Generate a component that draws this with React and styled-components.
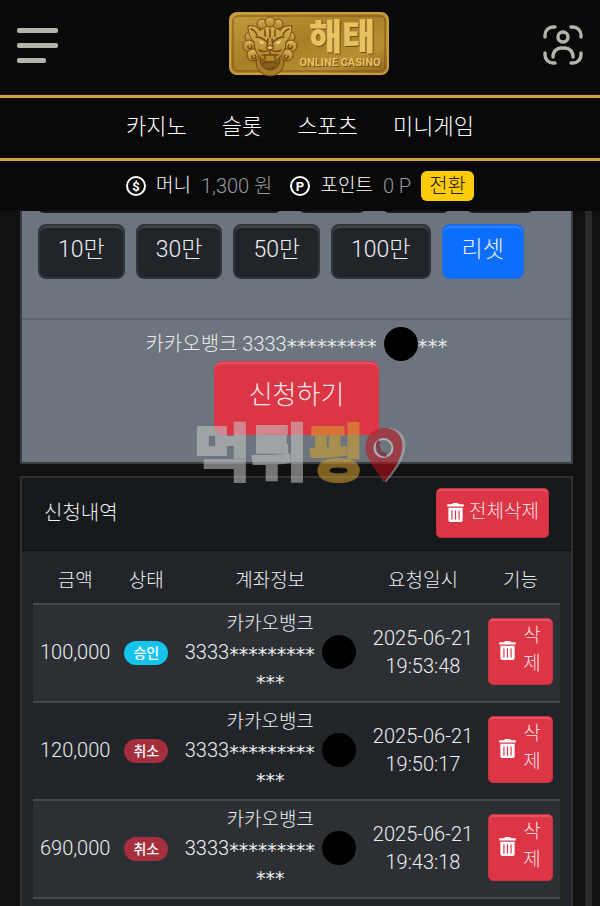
import React from "react";
import styled, { createGlobalStyle } from "styled-components";
import { FaTrashAlt } from "react-icons/fa";

const GlobalStyle = createGlobalStyle`
  * {
    box-sizing: border-box;
  }
  body {
    margin: 0;
    background-color: #111111;
    color: #eceef0;
    font-family: Roboto, "Noto Sans CJK KR", sans-serif;
    font-size: 20px;
    font-weight: 300;
    line-height: 28px;
    overflow: hidden;
  }
  button {
    font: inherit;
    cursor: pointer;
  }
`;

const Page = styled.div`
  min-height: 100vh;
  display: flex;
  flex-direction: column;
`;

const Header = styled.header`
  background-color: #090909;
`;

const TopBar = styled.div`
  height: 95px;
  padding: 0 16px 5px;
  display: grid;
  grid-template-columns: 1fr auto 1fr;
  align-items: center;
  border-bottom: 1px solid #1a0c00;
`;

const IconButton = styled.button`
  display: flex;
  padding: 0;
  border: none;
  background: none;
  color: #b5b5a9;
  justify-self: ${(props) => (props.$end ? "end" : "start")};
`;

const LogoLink = styled.a`
  display: flex;
  padding-left: 18px;
`;

const Nav = styled.nav`
  display: flex;
  justify-content: center;
  gap: 35px;
  padding: 14px 0 16px;
  line-height: 30px;
  border-top: 3px solid #d2a336;
  border-bottom: 3px solid #d2a336;
`;

const NavLink = styled.a`
  color: #ffffff;
  font-size: 22px;
  text-decoration: none;
`;

const Wallet = styled.div`
  height: 50px;
  display: flex;
  justify-content: center;
  align-items: center;
  gap: 10px;
`;

const WalletLabel = styled.span`
  color: #ffffff;
  font-size: 19px;
`;

const WalletValue = styled.span`
  color: #98989a;
  margin-right: ${(props) => (props.$wide ? "8px" : "0")};
`;

const SwitchButton = styled.button`
  height: 30px;
  padding: 0 8px;
  border: none;
  border-radius: 6px;
  background-color: #fecb0a;
  color: #222222;
  line-height: 26px;
`;

const Body = styled.div`
  flex: 1;
  display: flex;
  gap: 12px;
  padding: 0 8px 0 20px;
`;

const Main = styled.main`
  flex: 1;
  min-width: 0;
  display: flex;
  flex-direction: column;
  gap: 12px;
`;

const Rail = styled.div`
  width: 7px;
  background-color: #292929;
`;

const RequestCard = styled.section`
  border: 2px solid #3b3e41;
  border-top: none;
  background-color: #6c757d;
`;

const Amounts = styled.div`
  padding: 0 16px 39px;
  border-bottom: 2px solid #5b646b;
`;

const ClippedRow = styled.div`
  display: flex;
  align-items: flex-end;
  gap: 18px;
  height: 2px;
  margin-bottom: 11px;
  overflow: hidden;
`;

const ClippedBox = styled.div`
  flex: ${(props) => props.$grow || 66} 0 0;
  max-width: ${(props) => props.$grow || 66}px;
  height: 20px;
  border-radius: 6px;
  background-color: #181a1e;
`;

const AmountRow = styled.div`
  display: flex;
  gap: 11px;
`;

const AmountButton = styled.button`
  height: 55px;
  padding: 0 18px 4px;
  border: 2px solid ${(props) => (props.$reset ? "#1a6df0" : "#30353b")};
  border-radius: 8px;
  background-color: ${(props) => (props.$reset ? "#0d6efd" : "#212429")};
  box-shadow: inset 0 2px 0 rgba(255, 255, 255, 0.15);
  color: #eceef0;
  font-size: 23px;
`;

const Account = styled.div`
  display: flex;
  flex-direction: column;
  align-items: center;
  padding: 10px 16px 27px;
`;

const AccountText = styled.p`
  margin: 0;
  height: 31px;
  color: #e6e8ea;
`;

const Hangul = styled.span`
  font-size: 19px;
`;

const Stars = styled.span`
  font-family: "DejaVu Sans", sans-serif;
  font-size: ${(props) => (props.$large ? "20px" : "19px")};
  font-weight: 400;
  line-height: 0;
  vertical-align: -2px;
`;

const Mask = styled.span`
  display: inline-block;
  width: 34px;
  height: 34px;
  margin: -8px 0 -4px 2px;
  border-radius: 50%;
  background-color: #000000;
  vertical-align: middle;
`;

const SubmitButton = styled.button`
  height: 74px;
  padding: 0 34px 6px;
  border: 1px solid #d63b4a;
  border-radius: 8px;
  background-color: #dc3545;
  box-shadow: inset 0 2px 0 rgba(255, 255, 255, 0.15);
  color: #fbe9eb;
  font-size: 26px;
`;

const HistoryCard = styled.section`
  flex: 1;
  border: 2px solid #2f3032;
  border-bottom: none;
  background-color: #212429;
`;

const HistoryHead = styled.div`
  display: flex;
  justify-content: space-between;
  align-items: center;
  padding: 10px 22px 11px;
  border-bottom: 2px solid #121417;
  background-color: #171a1d;
`;

const HistoryTitle = styled.h2`
  margin: 0;
  font-size: 20px;
  font-weight: 300;
`;

const DeleteButton = styled.button`
  display: inline-flex;
  align-items: center;
  justify-content: center;
  gap: 4px;
  padding: ${(props) => (props.$tall ? "3px 9px 6px" : "9px 9px 11px")};
  border: 1px solid #c9303f;
  border-radius: 5px;
  background-color: #dc3545;
  box-shadow: inset 0 2px 0 rgba(255, 255, 255, 0.15);
  color: #f9dfe2;
  font-size: 19px;
  vertical-align: middle;

  svg {
    flex: none;
    color: #ffffff;
  }
`;

const DeleteLabel = styled.span`
  width: ${(props) => (props.$narrow ? "22px" : "auto")};
  word-break: break-all;
`;

const TableWrap = styled.div`
  padding: 8px 11px 0;
`;

const Table = styled.table`
  width: 100%;
  table-layout: fixed;
  border-collapse: collapse;
  text-align: center;
`;

const Col = styled.col`
  width: ${(props) => props.$width};
`;

const Th = styled.th`
  height: 45px;
  padding: 0;
  font-size: 19px;
  font-weight: 300;
`;

const Tr = styled.tr`
  height: 98px;
  border-top: 2px solid #45494c;
  border-bottom: 2px solid #45494c;

  &:nth-child(odd) {
    background-color: #2c3034;
  }
`;

const Td = styled.td`
  padding: 4px 4px 7px;
`;

const Badge = styled.span`
  display: inline-block;
  padding: 0 9px;
  border-radius: 12px;
  background-color: ${(props) => (props.$approved ? "#14c4ea" : "#a52f3d")};
  color: #ffffff;
  font-size: 14px;
  font-weight: 500;
  line-height: 24px;
  vertical-align: middle;
`;

const Watermark = styled.div`
  position: fixed;
  top: 50%;
  left: 50%;
  display: flex;
  align-items: center;
  padding-top: 4px;
  transform: translate(-50%, -50%);
  color: #c9c9c9;
  font-size: 62px;
  font-weight: 900;
  line-height: 56px;
  white-space: nowrap;
  opacity: 0.55;
  pointer-events: none;
  -webkit-text-stroke: 2px currentColor;
`;

const Gold = styled.span`
  color: #d9a22e;
`;

const LogoText = styled.text`
  fill: #e6c263;
  font-size: ${(props) => (props.$small ? "11px" : "36px")};
  font-weight: ${(props) => (props.$small ? 700 : 900)};
  text-anchor: middle;
  text-shadow: 1px 1px 0 #704d14;
`;

const MenuIcon = () => (
  <svg width="42" height="40" viewBox="0 0 42 40" fill="currentColor">
    <rect x="1" y="3" width="41" height="5" rx="2" />
    <rect x="1" y="18" width="41" height="5" rx="2" />
    <rect x="1" y="33" width="29" height="5" rx="2" />
  </svg>
);

const UserScanIcon = () => (
  <svg
    width="42"
    height="42"
    viewBox="0 0 42 42"
    fill="none"
    stroke="currentColor"
    strokeWidth="3.4"
    strokeLinecap="round"
  >
    <path d="M3 13v-2a8 8 0 0 1 8-8h2M29 3h2a8 8 0 0 1 8 8v2M39 29v2a8 8 0 0 1-8 8h-2M13 39h-2a8 8 0 0 1-8-8v-2" />
    <circle cx="21" cy="13" r="5" />
    <path d="M11 33c0-6 4-9 8-9h4c4 0 8 3 8 9" />
  </svg>
);

const CoinIcon = ({ letter }) => (
  <svg width="20" height="20" viewBox="0 0 20 20">
    <circle cx="10" cy="10" r="9" fill="none" stroke="#fff" strokeWidth="2" />
    <text x="10" y="15" fill="#fff" fontSize="13" fontWeight="700" textAnchor="middle">
      {letter}
    </text>
  </svg>
);

const Logo = () => (
  <svg width="160" height="66" viewBox="0 0 160 66" role="img" aria-label="해태 ONLINE CASINO">
    <defs>
      <linearGradient id="plate" x1="0" y1="0" x2="1" y2="1">
        <stop offset="0" stopColor="#c49b3c" />
        <stop offset="0.45" stopColor="#a87e27" />
        <stop offset="0.75" stopColor="#b98f35" />
        <stop offset="1" stopColor="#8f681c" />
      </linearGradient>
      <linearGradient id="shine" x1="0" y1="0" x2="0" y2="1">
        <stop offset="0" stopColor="#dcb656" />
        <stop offset="1" stopColor="#ad8029" />
      </linearGradient>
    </defs>
    <rect x="1" y="1" width="158" height="61" rx="7" fill="url(#plate)" stroke="#c99e40" strokeWidth="2" />
    <rect x="4" y="4" width="152" height="55" rx="5" fill="none" stroke="#795515" />
    <g fill="url(#shine)" stroke="#6d4b12" strokeWidth="1">
      <circle cx="41" cy="50" r="14" fill="#a87c29" />
      <circle cx="41" cy="48" r="10" fill="#87601d" />
      <circle cx="21" cy="25" r="5" />
      <circle cx="61" cy="25" r="5" />
      <circle cx="20" cy="34" r="6" />
      <circle cx="62" cy="34" r="6" />
      <circle cx="24" cy="43" r="6" />
      <circle cx="58" cy="43" r="6" />
      <path d="M19 14c6-1 10 1 12 5 1-8 6-12 10-12s9 4 10 12c2-4 6-6 12-5 0 8-3 13-6 16 0 8-4 17-16 21-12-4-16-13-16-21-3-3-6-8-6-16z" />
      <circle cx="33" cy="12" r="5" />
      <circle cx="49" cy="12" r="5" />
      <circle cx="41" cy="10" r="5" />
    </g>
    <g fill="none" stroke="#6d4b12" strokeWidth="1.5" strokeLinecap="round">
      <path d="M22 17c3 1 5 3 6 6M60 17c-3 1-5 3-6 6M36 18v6M46 18v6M41 17v8" />
      <path d="M27 25c4 0 8 2 11 5M55 25c-4 0-8 2-11 5M39 27l-1 9M43 27l1 9" />
      <path d="M30 38c5 3 8 1 11-1 3 2 6 4 11 1M41 38v4M33 43h16M36 43v4M46 43v4" />
      <path d="M19 34a2 2 0 1 0 3-1M63 34a2 2 0 1 1-3-1M23 44a2 2 0 1 0 3-1M59 44a2 2 0 1 1-3-1" />
      <path d="M34 52c3-3 11-3 14 0M37 56c3 2 6 1 8-1" />
    </g>
    <path d="M30 28l6 3-4 1zM52 28l-6 3 4 1z" fill="#f0d88a" />
    <path d="M37 36l4-3 4 3-4 2z" fill="#e2bf66" stroke="#6d4b12" />
    <LogoText x="113" y="38">해태</LogoText>
    <LogoText $small x="111" y="54">ONLINE CASINO</LogoText>
  </svg>
);

const PinIcon = () => (
  <svg width="42" height="56" viewBox="0 0 42 56">
    <path d="M24 1c10 0 17 7 17 17 0 13-9 25-19 37l-4-1z" fill="#b9b9b9" />
    <path d="M20 1c11 0 18 7 18 18 0 12-9 24-18 36C11 43 1 31 1 20 1 9 9 1 20 1z" fill="#c5121e" />
    <circle cx="19" cy="21" r="9" fill="#70777c" stroke="#e7e7e7" strokeWidth="2" />
    <path d="M15 14a9 9 0 0 0 7 14" fill="none" stroke="#8d1119" strokeWidth="4" />
  </svg>
);

const menu = ["카지노", "슬롯", "스포츠", "미니게임"];
const amounts = ["10만", "30만", "50만", "100만"];
const columns = [
  { name: "금액", width: "16%" },
  { name: "상태", width: "11%" },
  { name: "계좌정보", width: "36%" },
  { name: "요청일시", width: "22%" },
  { name: "기능", width: "15%" },
];
const requests = [
  { amount: "100,000", approved: true, date: "2025-06-21", time: "19:53:48" },
  { amount: "120,000", approved: false, date: "2025-06-21", time: "19:50:17" },
  { amount: "690,000", approved: false, date: "2025-06-21", time: "19:43:18" },
];

const HistoryRow = ({ request }) => (
  <Tr>
    <Td>{request.amount}</Td>
    <Td>
      <Badge $approved={request.approved}>{request.approved ? "승인" : "취소"}</Badge>
    </Td>
    <Td>
      <Hangul>카카오뱅크</Hangul>
      <br />
      3333<Stars>*********</Stars> <Mask />
      <br />
      <Stars>***</Stars>
    </Td>
    <Td>
      {request.date} {request.time}
    </Td>
    <Td>
      <DeleteButton $tall>
        <FaTrashAlt size={19} />
        <DeleteLabel $narrow>삭제</DeleteLabel>
      </DeleteButton>
    </Td>
  </Tr>
);

const App = () => {
  return (
    <Page>
      <GlobalStyle />
      <Header>
        <TopBar>
          <IconButton aria-label="메뉴">
            <MenuIcon />
          </IconButton>
          <LogoLink href="/">
            <Logo />
          </LogoLink>
          <IconButton $end aria-label="내 정보">
            <UserScanIcon />
          </IconButton>
        </TopBar>
        <Nav>
          {menu.map((item) => (
            <NavLink href="#" key={item}>
              {item}
            </NavLink>
          ))}
        </Nav>
        <Wallet>
          <CoinIcon letter="$" />
          <WalletLabel>머니</WalletLabel>
          <WalletValue $wide>1,300 원</WalletValue>
          <CoinIcon letter="P" />
          <WalletLabel>포인트</WalletLabel>
          <WalletValue>0 P</WalletValue>
          <SwitchButton>전환</SwitchButton>
        </Wallet>
      </Header>
      <Body>
        <Main>
          <RequestCard>
            <Amounts>
              <ClippedRow>
                <ClippedBox $grow={243} />
                <ClippedBox />
                <ClippedBox />
                <ClippedBox />
              </ClippedRow>
              <AmountRow>
                {amounts.map((amount) => (
                  <AmountButton key={amount}>{amount}</AmountButton>
                ))}
                <AmountButton $reset>리셋</AmountButton>
              </AmountRow>
            </Amounts>
            <Account>
              <AccountText>
                카카오뱅크 3333<Stars $large>*********</Stars> <Mask />
                <Stars $large>***</Stars>
              </AccountText>
              <SubmitButton>신청하기</SubmitButton>
            </Account>
          </RequestCard>
          <HistoryCard>
            <HistoryHead>
              <HistoryTitle>신청내역</HistoryTitle>
              <DeleteButton>
                <FaTrashAlt size={19} />
                <DeleteLabel>전체삭제</DeleteLabel>
              </DeleteButton>
            </HistoryHead>
            <TableWrap>
              <Table>
                <colgroup>
                  {columns.map((column) => (
                    <Col key={column.name} $width={column.width} />
                  ))}
                </colgroup>
                <thead>
                  <tr>
                    {columns.map((column) => (
                      <Th key={column.name}>{column.name}</Th>
                    ))}
                  </tr>
                </thead>
                <tbody>
                  {requests.map((request) => (
                    <HistoryRow key={request.time} request={request} />
                  ))}
                </tbody>
              </Table>
            </TableWrap>
          </HistoryCard>
        </Main>
        <Rail />
      </Body>
      <Watermark>
        먹튀<Gold>핑</Gold>
        <PinIcon />
      </Watermark>
    </Page>
  );
};

export default App;
